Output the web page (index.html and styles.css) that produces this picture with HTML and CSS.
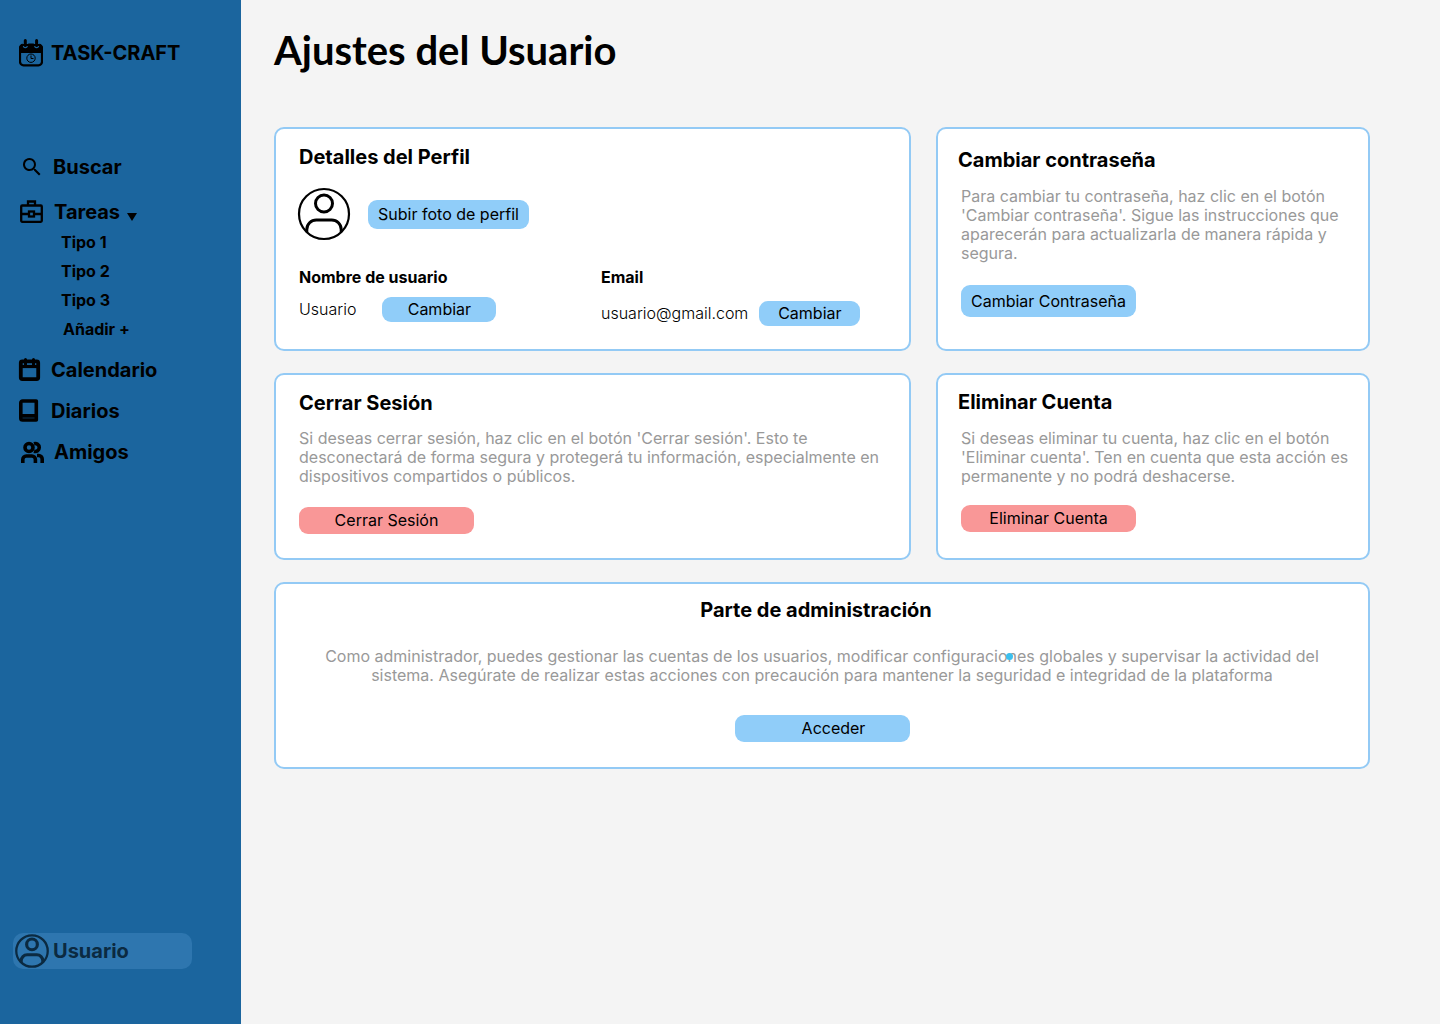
FILE: index.html
```html
<!DOCTYPE html>
<html lang="es">
<head>
<meta charset="utf-8">
<meta name="viewport" content="width=device-width, initial-scale=1">
<title>Task-Craft · Ajustes del Usuario</title>
<link rel="stylesheet" href="styles.css">
</head>
<body>
<svg class="symbols" width="0" height="0" aria-hidden="true">
  <symbol id="avatar" viewBox="0 0 54 54">
    <g fill="none" stroke="currentColor">
      <circle cx="27" cy="27" r="25"/>
      <g class="avatar-figure">
        <circle cx="27" cy="16.500" r="8.500"/>
        <path d="M9.800 45V42.500a9.500 9.500 0 0 1 9.500-9.500h15.400a9.500 9.500 0 0 1 9.500 9.500V45"/>
      </g>
    </g>
  </symbol>
</svg>
<div class="app">
  <aside class="sidebar">
    <a class="brand" href="#">
      <svg width="24" height="28" viewBox="0 0 24 28" aria-hidden="true">
        <rect x="1" y="6" width="22" height="20.300" rx="3.500" fill="none" stroke="currentColor" stroke-width="2.200"/>
        <path d="M0 14V9a5 5 0 0 1 3.500-4.500C3.500 8 4.500 9.300 6.300 9.300S9.200 8 9.200 4.500h5.600c0 3.500 1 4.800 2.800 4.800s2.900-1.300 2.900-4.800A5 5 0 0 1 24 9v5z" fill="currentColor"/>
        <path d="M6.300 1.500v5M17.600 1.500v5" stroke="currentColor" stroke-width="3" stroke-linecap="round"/>
        <circle cx="12" cy="19.200" r="4.200" fill="none" stroke="currentColor"/>
        <path d="M12 16.500v3h2.500" fill="none" stroke="currentColor"/>
      </svg>
      <span>TASK-CRAFT</span>
    </a>
    <nav class="nav">
      <a class="nav-item nav-item-search" href="#">
        <svg width="24" height="24" viewBox="0 0 24 24" fill="currentColor" aria-hidden="true"><path d="M15.500 14h-.8l-.3-.3A6.500 6.500 0 1 0 13.700 14.400l.3.300v.8l5 5 1.500-1.500zm-6 0a4.500 4.500 0 1 1 0-9 4.500 4.500 0 0 1 0 9z"/></svg>
        <span>Buscar</span>
      </a>
      <a class="nav-item nav-item-wide nav-item-open" href="#" aria-expanded="true">
        <svg width="24" height="24" viewBox="0 0 24 24" fill="none" stroke="currentColor" stroke-width="2.300" aria-hidden="true"><rect x="1.200" y="5.500" width="20.600" height="16.300" rx="1"/><path d="M8 5.500V1.500h7v4M1 14h8M14 14h8"/><rect x="9" y="11.500" width="5" height="5"/></svg>
        <span>Tareas</span>
        <svg class="caret" width="10" height="8" viewBox="0 0 10 8" aria-hidden="true"><path d="M0 0h10L5 8z" fill="currentColor"/></svg>
      </a>
      <ul class="subnav">
        <li><a href="#">Tipo 1</a></li>
        <li><a href="#">Tipo 2</a></li>
        <li><a href="#">Tipo 3</a></li>
        <li class="subnav-add"><a href="#">Añadir +</a></li>
      </ul>
      <a class="nav-item" href="#">
        <svg width="24" height="24" viewBox="0 0 24 24" fill="none" stroke="currentColor" aria-hidden="true"><rect x="2.800" y="3.300" width="17.400" height="17.800" rx="1.500" stroke-width="3.800"/><path d="M3 8.500h17" stroke-width="3.200"/><path d="M7.500 1.500v5M15.500 1.500v5" stroke-width="3" stroke-linecap="round"/></svg>
        <span>Calendario</span>
      </a>
      <a class="nav-item" href="#">
        <svg width="24" height="24" viewBox="0 0 24 24" fill="none" stroke="currentColor" aria-hidden="true"><path d="M18.300 16.900V2H4.600a1.800 1.800 0 0 0-1.800 1.800v15.400c0 1 .8 1.800 1.800 1.800h13.700v-4.100H3" stroke-width="3.600" stroke-linejoin="round"/></svg>
        <span>Diarios</span>
      </a>
      <a class="nav-item nav-item-wide" href="#">
        <svg width="24" height="24" viewBox="0 0 24 24" fill="none" stroke="currentColor" stroke-width="3.600" aria-hidden="true"><circle cx="9" cy="7.500" r="4"/><path d="M14 3.700a4 4 0 1 1 0 7.600M2.800 23v-3.500a3.500 3.500 0 0 1 3.500-3.500h5.600a3.500 3.500 0 0 1 3.500 3.500V23M17 15.500h1.700a3.500 3.500 0 0 1 3.500 3.500v4"/></svg>
        <span>Amigos</span>
      </a>
    </nav>
    <a class="user-link" href="#" aria-current="page">
      <svg width="34" height="34" stroke-width="3.600" aria-hidden="true"><use href="#avatar"/></svg>
      <span>Usuario</span>
    </a>
  </aside>

  <main class="main">
    <h1>Ajustes del Usuario</h1>
    <div class="cards">
      <section class="card card-profile">
        <h2>Detalles del Perfil</h2>
        <div class="photo-row">
          <svg class="avatar" width="54" height="54" stroke-width="2.200" aria-hidden="true"><use href="#avatar"/></svg>
          <button class="btn btn-photo" type="button">Subir foto de perfil</button>
        </div>
        <dl class="fields">
          <div class="field">
            <dt>Nombre de usuario</dt>
            <dd class="field-name"><span>Usuario</span><button class="btn" type="button">Cambiar</button></dd>
          </div>
          <div class="field">
            <dt>Email</dt>
            <dd class="field-email"><span>usuario@gmail.com</span><button class="btn" type="button">Cambiar</button></dd>
          </div>
        </dl>
      </section>

      <section class="card card-side card-password">
        <h2>Cambiar contraseña</h2>
        <p>Para cambiar tu contraseña, haz clic en el botón 'Cambiar contraseña'. Sigue las instrucciones que aparecerán para actualizarla de manera rápida y segura.</p>
        <button class="btn btn-tall" type="button">Cambiar Contraseña</button>
      </section>

      <section class="card card-logout">
        <h2>Cerrar Sesión</h2>
        <p>Si deseas cerrar sesión, haz clic en el botón 'Cerrar sesión'. Esto te desconectará de forma segura y protegerá tu información, especialmente en dispositivos compartidos o públicos.</p>
        <button class="btn btn-danger" type="button">Cerrar Sesión</button>
      </section>

      <section class="card card-side card-delete">
        <h2>Eliminar Cuenta</h2>
        <p>Si deseas eliminar tu cuenta, haz clic en el botón 'Eliminar cuenta'. Ten en cuenta que esta acción es permanente y no podrá deshacerse.</p>
        <button class="btn btn-danger" type="button">Eliminar Cuenta</button>
      </section>

      <section class="card card-admin">
        <h2>Parte de administración</h2>
        <p>Como administrador, puedes gestionar las cuentas de los usuarios, modificar configuraciones globales y supervisar la actividad del sistema. Asegúrate de realizar estas acciones con precaución para mantener la seguridad e integridad de la plataforma</p>
        <button class="btn btn-access" type="button">Acceder</button>
      </section>
    </div>
  </main>
</div>
</body>
</html>
```
FILE: styles.css
```css
* { box-sizing: border-box; }

body {
  margin: 0;
  background: #f4f4f4;
  color: #000;
  font: 400 16px/19px Inter, sans-serif;
}

h1, h2, p, dl, dd, ul { margin: 0; padding: 0; }
a { color: inherit; text-decoration: none; }
svg { display: block; flex: none; }
.symbols { position: absolute; }
.avatar-figure { stroke-width: var(--figure-stroke, 3px); }

.app { display: flex; min-height: 100vh; }

/* Sidebar */
.sidebar {
  display: flex;
  flex-direction: column;
  flex: none;
  width: 241px;
  padding: 39px 0 55px;
  background: #1b659e;
  font-weight: 700;
}

.brand {
  display: flex;
  align-items: center;
  gap: 8px;
  padding-left: 19px;
  font-size: 20px;
  line-height: 28px;
}

.nav { margin-top: 88px; }

.nav-item {
  display: flex;
  align-items: center;
  gap: 9px;
  margin-bottom: 17px;
  padding-left: 18px;
  font-size: 20px;
  line-height: 24px;
}

.nav-item-search { margin-bottom: 21px; padding-left: 20px; }
.nav-item-wide { gap: 10px; padding-left: 20px; }
.nav-item-open { margin-bottom: 4px; }
.nav-item .caret { margin: 10px 0 0 -3px; }

.subnav {
  margin-bottom: 14px;
  padding-left: 61px;
  list-style: none;
  line-height: 29px;
}
.subnav-add { padding-left: 2px; }

.user-link {
  --figure-stroke: 5px;
  display: flex;
  align-items: center;
  gap: 4px;
  width: 179px;
  height: 36px;
  margin: auto 0 0 13px;
  padding-left: 2px;
  border-radius: 10px;
  background: #2e76af;
  color: #0b2a41;
  font-size: 20px;
}

/* Content */
.main { flex: 1; min-width: 0; padding: 24px 70px 24px 33px; }

h1 {
  margin-bottom: 51px;
  font: 700 40px/52px Lato, sans-serif;
}

h2 { font-size: 20px; font-weight: 700; line-height: 24px; }

.cards {
  display: grid;
  grid-template-columns: 637fr 434fr;
  gap: 22px 25px;
}

.card {
  padding: 16px 22px 24px 23px;
  border: 2px solid #93caf5;
  border-radius: 10px;
  background: #fff;
}

.card p { margin-top: 14px; color: #999; }

.btn {
  display: block;
  width: 175px;
  height: 27px;
  padding: 0;
  border: 0;
  border-radius: 9px;
  background: #90cdf9;
  color: #000;
  font: inherit;
  cursor: pointer;
}
.btn-danger { background: #f99797; }
.btn-tall { height: 32px; }

.card-profile { padding-bottom: 23px; }
.photo-row { display: flex; align-items: center; gap: 17px; margin: 18px 0 27px; }
.avatar { margin-left: -2px; }
.btn-photo { width: 161px; height: 29px; }

.fields { display: grid; grid-template-columns: 302px 1fr; }
.field dt { font-weight: 700; }
.field dd { display: flex; align-items: center; margin-top: 10px; }
.field span { font-weight: 300; }
.field .btn { width: 114px; height: 25px; }
.field-name { gap: 26px; }
.field .field-email { gap: 11px; margin-top: 14px; }
.field-email .btn { width: 101px; }

.card-logout .btn { margin-top: 21px; }

.card-side { padding-right: 12px; padding-left: 20px; }
.card-side p, .card-side .btn { margin-left: 3px; }
.card-password { padding-top: 19px; }
.card-password p { margin-top: 15px; }
.card-password .btn { margin-top: 22px; }
.card-delete { padding-top: 15px; }
.card-delete p { margin-top: 15px; }
.card-delete .btn { margin-top: 19px; }

.card-admin {
  position: relative;
  grid-column: 1 / -1;
  padding: 14px 22px 25px;
  text-align: center;
}
.card-admin h2 { padding-right: 12px; }
.card-admin p { max-width: 1000px; margin: 25px auto 30px; }
.btn-access { margin: 0 auto; padding-left: 23px; }

/* Pointer dot over the administration text */
.card-admin::after {
  content: "";
  position: absolute;
  top: 69px;
  left: calc(50% + 184px);
  width: 7px;
  height: 7px;
  border-radius: 50%;
  background: #3cc0ee;
}
```
